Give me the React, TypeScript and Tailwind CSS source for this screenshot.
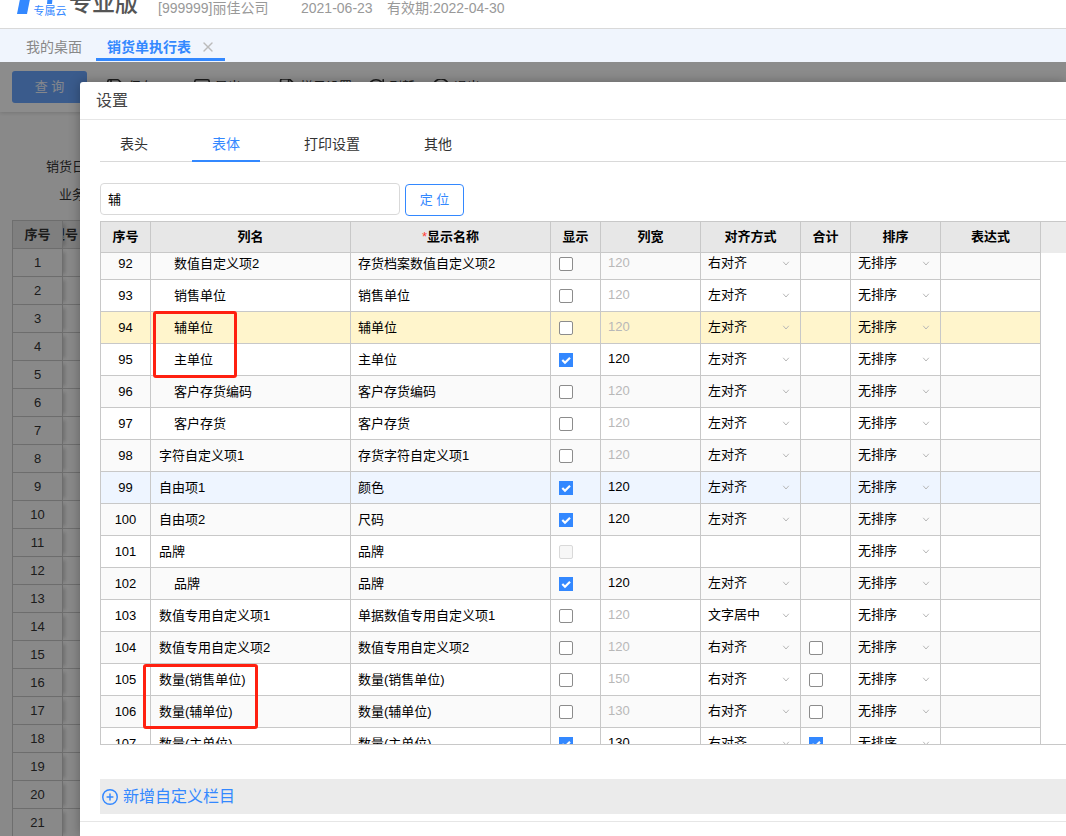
import clsx from 'clsx';
import { CirclePlus, CirclePower, FileText, RotateCw, Save, SquareArrowRight, X } from 'lucide-react';

type Row = {
  no: number;
  name: string;
  label: string;
  indent?: boolean;
  show: boolean | 'disabled';
  width?: number;
  align?: string;
  total?: boolean;
};

const rows: Row[] = [
  { no: 92, name: '数值自定义项2', label: '存货档案数值自定义项2', indent: true, show: false, width: 120, align: '右对齐' },
  { no: 93, name: '销售单位', label: '销售单位', indent: true, show: false, width: 120, align: '左对齐' },
  { no: 94, name: '辅单位', label: '辅单位', indent: true, show: false, width: 120, align: '左对齐' },
  { no: 95, name: '主单位', label: '主单位', indent: true, show: true, width: 120, align: '左对齐' },
  { no: 96, name: '客户存货编码', label: '客户存货编码', indent: true, show: false, width: 120, align: '左对齐' },
  { no: 97, name: '客户存货', label: '客户存货', indent: true, show: false, width: 120, align: '左对齐' },
  { no: 98, name: '字符自定义项1', label: '存货字符自定义项1', show: false, width: 120, align: '左对齐' },
  { no: 99, name: '自由项1', label: '颜色', show: true, width: 120, align: '左对齐' },
  { no: 100, name: '自由项2', label: '尺码', show: true, width: 120, align: '左对齐' },
  { no: 101, name: '品牌', label: '品牌', show: 'disabled' },
  { no: 102, name: '品牌', label: '品牌', indent: true, show: true, width: 120, align: '左对齐' },
  { no: 103, name: '数值专用自定义项1', label: '单据数值专用自定义项1', show: false, width: 120, align: '文字居中' },
  { no: 104, name: '数值专用自定义项2', label: '数值专用自定义项2', show: false, width: 120, align: '右对齐', total: false },
  { no: 105, name: '数量(销售单位)', label: '数量(销售单位)', show: false, width: 150, align: '右对齐', total: false },
  { no: 106, name: '数量(辅单位)', label: '数量(辅单位)', show: false, width: 130, align: '右对齐', total: false },
  { no: 107, name: '数量(主单位)', label: '数量(主单位)', show: true, width: 130, align: '右对齐', total: true },
];

const tools = [
  { icon: Save, text: '保存', width: 'w-[87px]' },
  { icon: SquareArrowRight, text: '导出', width: 'w-[85px]' },
  { icon: FileText, text: '栏目设置', width: 'w-[89px]' },
  { icon: RotateCw, text: '刷新', width: 'w-[65px]' },
  { icon: CirclePower, text: '退出', width: 'w-[65px]' },
];

const tabs = ['表头', '表体', '打印设置', '其他'];
const highlighted = 94;
const hovered = 99;

function Check({ label, value }: { label: string; value: boolean | 'disabled' }) {
  return (
    <span className="relative flex size-[14px]">
      <input
        type="checkbox"
        aria-label={label}
        defaultChecked={value === true}
        disabled={value === 'disabled'}
        className="peer size-[14px] appearance-none rounded-[2px] border border-[#8c8c8c] bg-white checked:rounded-none checked:border-[#3388ff] checked:bg-[#3388ff] disabled:border-[#d9d9d9] disabled:bg-[#f7f7f7]"
      />
      <svg viewBox="0 0 14 14" className="pointer-events-none absolute inset-0 hidden peer-checked:block">
        <path d="M3.3 7 6 9.7l5-5" fill="none" stroke="#fff" strokeWidth="2.2" />
      </svg>
    </span>
  );
}

function Picker({ label, value, options }: { label: string; value: string; options: string[] }) {
  return (
    <div className="flex items-center pr-[10px] pb-[2px]">
      <select aria-label={label} defaultValue={value} className="min-w-0 flex-1 appearance-none bg-transparent pl-[7px]">
        {options.map((o) => (
          <option key={o}>{o}</option>
        ))}
      </select>
      <svg viewBox="0 0 8 8" className="pointer-events-none size-2 shrink-0">
        <path d="M1.2 2.8 4 6l2.8-3.2" fill="none" stroke="#b8b8b8" strokeWidth="1" />
      </svg>
    </div>
  );
}

function Columns() {
  return (
    <colgroup>
      <col className="w-[50px]" />
      <col className="w-[200px]" />
      <col className="w-[200px]" />
      <col className="w-[50px]" />
      <col className="w-[100px]" />
      <col className="w-[100px]" />
      <col className="w-[50px]" />
      <col className="w-[90px]" />
      <col className="w-[100px]" />
    </colgroup>
  );
}

function ColumnTable() {
  const heads = ['序号', '列名', '显示名称', '显示', '列宽', '对齐方式', '合计', '排序', '表达式'];
  return (
    <div className="flex h-[524px] flex-col overflow-hidden border-y border-l border-[#c8c8c8] text-[13px] text-black">
      <div className="h-[31px] shrink-0 bg-[#ebebeb]">
        <table className="w-[940px] table-fixed border-separate border-spacing-0">
          <Columns />
          <thead>
            <tr className="h-[31px] bg-[#e7e7e7]">
              {heads.map((h) => (
                <th key={h} scope="col" className="border-r border-b border-[#c8c8c8] p-0 font-bold">
                  {h === '显示名称' && <span className="font-normal text-[#ff3b30]">*</span>}
                  {h}
                </th>
              ))}
            </tr>
          </thead>
        </table>
      </div>
      <div className="flex min-h-0 flex-1 flex-col overflow-hidden">
        <table className="-mt-[5px] w-[940px] shrink-0 table-fixed border-separate border-spacing-0">
          <Columns />
          <tbody>
            {rows.map((r) => (
              <tr
                key={r.no}
                className={clsx(
                  'h-8 *:border-r *:border-b *:border-[#c8c8c8] *:p-0',
                  r.no === highlighted ? 'bg-[#fff5cc]' : r.no === hovered ? 'bg-[#eef5ff]' : 'even:bg-white odd:bg-[#fafafa]',
                )}
              >
                <td className="text-center">{r.no}</td>
                <td>
                  <span className={r.indent ? 'pl-[23px]' : 'pl-2'}>{r.name}</span>
                </td>
                <td>
                  <span className="pl-[7px]">{r.label}</span>
                </td>
                <td>
                  <div className="pl-2">
                    <Check label={`显示 ${r.no}`} value={r.show} />
                  </div>
                </td>
                <td>
                  {r.width && (
                    <input
                      aria-label={`列宽 ${r.no}`}
                      defaultValue={r.width}
                      disabled={!r.show}
                      className="block w-full bg-transparent px-[7px] pb-[2px] disabled:text-[#b8b8b8]"
                    />
                  )}
                </td>
                <td>{r.align && <Picker label={`对齐方式 ${r.no}`} value={r.align} options={['左对齐', '右对齐', '文字居中']} />}</td>
                <td>
                  {r.total !== undefined && (
                    <div className="pl-2">
                      <Check label={`合计 ${r.no}`} value={r.total} />
                    </div>
                  )}
                </td>
                <td>
                  <Picker label={`排序 ${r.no}`} value="无排序" options={['无排序', '升序', '降序']} />
                </td>
                <td />
              </tr>
            ))}
          </tbody>
        </table>
      </div>
    </div>
  );
}

function SettingsDialog() {
  return (
    <div role="dialog" aria-label="设置" className="absolute top-5 right-0 bottom-0 left-20 overflow-hidden rounded-tl-[3px] bg-white shadow-[0_0_12px_rgba(0,0,0,0.3)]">
      <h2 className="flex h-[38px] items-center border-b border-[#e6e6e6] px-4 text-[16px] text-[#444]">设置</h2>
      <div className="pt-2 pl-5">
        <nav className="flex h-[34px] gap-6 border-b border-[#d9d9d9] text-[14px]">
          {tabs.map((t) => (
            <button
              key={t}
              type="button"
              className={clsx(
                '-mb-px border-b-2 px-5',
                t === '表体' ? 'border-[#3388ff] text-[#3388ff]' : 'border-transparent text-[#333]',
              )}
            >
              {t}
            </button>
          ))}
        </nav>
        <div className="mt-[21px] mb-[5px] flex gap-[5px] text-[13px]">
          <input
            aria-label="查找栏目"
            defaultValue="辅"
            className="h-8 w-[300px] rounded-[4px] border border-[#d9d9d9] px-[7px] pb-[2px] text-black"
          />
          <button type="button" className="mt-px h-8 w-[59px] rounded-[4px] border border-[#3388ff] text-[#3388ff]">
            定 位
          </button>
        </div>
        <ColumnTable />
        <div className="mt-[34px] flex h-[35px] items-center bg-[#ebebeb] pl-[2px]">
          <button type="button" className="flex items-center gap-[5px] text-[16px] text-[#3388ff]">
            <CirclePlus className="size-4" strokeWidth={2} viewBox="1 1 22 22" />
            新增自定义栏目
          </button>
        </div>
      </div>
      <div className="mt-[7px] border-t border-[#e6e6e6]" />
      <div className="pointer-events-none absolute top-[229px] left-[73px] h-[67px] w-[84px] rounded-[3px] border-3 border-[#ff2010]" />
      <div className="pointer-events-none absolute top-[582px] left-[63px] h-[65px] w-[115px] rounded-[3px] border-3 border-[#ff2010]" />
    </div>
  );
}

function ReportPage() {
  return (
    <div className="h-full overflow-hidden bg-[#fafafa] text-[13px] text-[#333]">
      <div className="flex h-[50px] items-center bg-white pl-3 shadow-[0_1px_4px_rgba(0,0,0,0.15)]">
        <button type="button" className="mr-5 h-8 w-[75px] shrink-0 rounded-[3px] bg-[#6aa6ff] text-white/90">
          查 询
        </button>
        {tools.map(({ icon: Icon, text, width }) => (
          <button key={text} type="button" className={clsx('flex shrink-0 items-center gap-[5px]', width)}>
            <Icon className="size-4" strokeWidth={2} viewBox="2 2 20 20" />
            {text}
          </button>
        ))}
      </div>
      <div className="flex h-[108px] flex-col gap-2 pt-[45px] pl-[46px]">
        <span className="h-5 leading-5">销货日期</span>
        <span className="h-5 pl-[13px] leading-5">业务员</span>
      </div>
      <div className="pl-3">
        <table className="w-full table-fixed border-separate border-spacing-0 border-t border-l border-[#c8c8c8]">
          <colgroup>
            <col className="w-[50px]" />
            <col />
          </colgroup>
          <thead>
            <tr className="h-7 bg-[#e7e7e7] *:border-r *:border-b *:border-[#c8c8c8] *:p-0 *:first:shadow-[5px_0_4px_-3px_rgba(0,0,0,0.2)]">
              <th scope="col">序号</th>
              <th scope="col" className="overflow-hidden text-left">
                <div className="-ml-[11px]">型号</div>
              </th>
            </tr>
          </thead>
          <tbody>
            {Array.from({ length: 22 }, (_, i) => (
              <tr key={i} className="h-7 *:border-r *:border-b *:border-[#c8c8c8] *:p-0 *:first:shadow-[5px_0_4px_-3px_rgba(0,0,0,0.2)]">
                <td className="text-center">{i + 1}</td>
                <td />
              </tr>
            ))}
          </tbody>
        </table>
      </div>
    </div>
  );
}

export default function App() {
  return (
    <div className="flex h-screen flex-col overflow-hidden bg-white font-['Liberation_Sans','Noto_Sans_CJK_SC',sans-serif]">
      <header className="h-[29px] shrink-0 overflow-hidden border-b border-[#d9d9d9]">
        <div className="-mt-3 flex h-10 items-center pl-4 text-[14px] whitespace-nowrap text-[#999]">
          <svg viewBox="0 0 17 28" className="h-7 w-[17px] shrink-0">
            <path d="M5 0h10L11 20H1z" fill="#3388ff" />
          </svg>
          <div className="flex w-[34px] flex-col items-center pb-[6px] text-[11px] leading-3 text-[#3388ff]">
            <svg viewBox="0 0 6 12" className="h-3 w-[6px]">
              <path d="M1 0h5L5 11H0z" fill="#3388ff" />
            </svg>
            <span>专属云</span>
          </div>
          <span className="w-[91px] pb-[10px] pl-[2px] text-[23px] leading-6 font-medium text-[#555]">专业版</span>
          <span className="w-[143px]">[999999]丽佳公司</span>
          <span className="w-[86px]">2021-06-23</span>
          <span>有效期:2022-04-30</span>
        </div>
      </header>
      <nav className="flex h-[33px] shrink-0 items-start bg-[#f0f5fd] text-[14px]">
        <a href="#desk" className="flex h-8 items-center pt-1 pl-[26px] text-[#888]">
          我的桌面
        </a>
        <a href="#report" className="ml-[14px] flex h-8 w-[129px] items-center border-b-3 border-[#3388ff] pt-[7px] pl-[11px] font-bold text-[#3388ff]">
          销货单执行表
          <X className="ml-[9px] size-4 text-[#bbb]" />
        </a>
      </nav>
      <main className="relative min-h-0 flex-1">
        <ReportPage />
        <div className="absolute inset-0 bg-black/45" />
        <SettingsDialog />
      </main>
    </div>
  );
}
